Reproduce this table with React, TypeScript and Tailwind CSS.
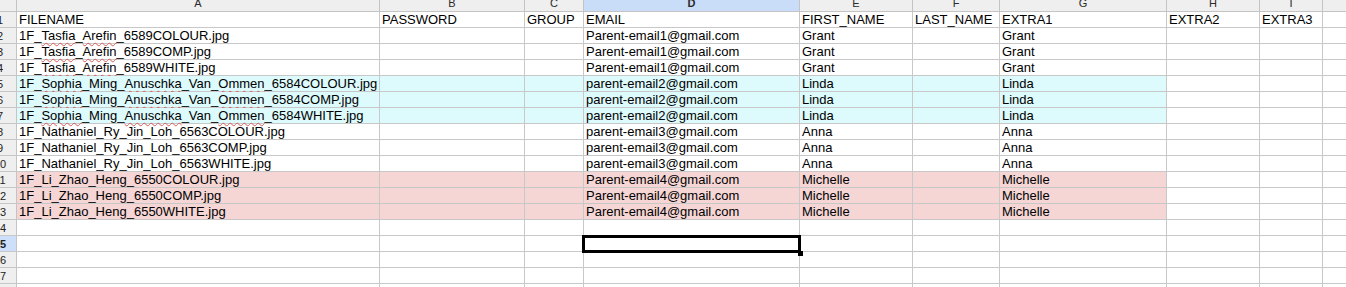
import React from "react";

type Part = string | { s: string };

const WCLS = [
  "w-[363px]",
  "w-[145px]",
  "w-[59px]",
  "w-[216px]",
  "w-[113px]",
  "w-[87px]",
  "w-[167px]",
  "w-[93px]",
  "w-[63px]",
];
const LETTERS = ["A", "B", "C", "D", "E", "F", "G", "H", "I"];

const file = (parts: Part[]) => parts;

type Row = { cells: (Part[] | string)[]; bg?: "cyan" | "pink" };

const rows: Row[] = [
  { cells: ["FILENAME", "PASSWORD", "GROUP", "EMAIL", "FIRST_NAME", "LAST_NAME", "EXTRA1", "EXTRA2", "EXTRA3"] },
  { cells: [file(["1F_", { s: "Tasfia" }, "_", { s: "Arefin" }, "_6589COLOUR.jpg"]), "", "", "Parent-email1@gmail.com", "Grant", "", "Grant", "", ""] },
  { cells: [file(["1F_", { s: "Tasfia" }, "_", { s: "Arefin" }, "_6589COMP.jpg"]), "", "", "Parent-email1@gmail.com", "Grant", "", "Grant", "", ""] },
  { cells: [file(["1F_", { s: "Tasfia" }, "_", { s: "Arefin" }, "_6589WHITE.jpg"]), "", "", "Parent-email1@gmail.com", "Grant", "", "Grant", "", ""] },
  { bg: "cyan", cells: [file(["1F_", { s: "Sophia" }, "_Ming_", { s: "Anuschka" }, "_Van_", { s: "Ommen" }, "_6584COLOUR.jpg"]), "", "", "parent-email2@gmail.com", "Linda", "", "Linda", "", ""] },
  { bg: "cyan", cells: [file(["1F_", { s: "Sophia" }, "_Ming_", { s: "Anuschka" }, "_Van_", { s: "Ommen" }, "_6584COMP.jpg"]), "", "", "parent-email2@gmail.com", "Linda", "", "Linda", "", ""] },
  { bg: "cyan", cells: [file(["1F_", { s: "Sophia" }, "_Ming_", { s: "Anuschka" }, "_Van_", { s: "Ommen" }, "_6584WHITE.jpg"]), "", "", "parent-email2@gmail.com", "Linda", "", "Linda", "", ""] },
  { cells: ["1F_Nathaniel_Ry_Jin_Loh_6563COLOUR.jpg", "", "", "parent-email3@gmail.com", "Anna", "", "Anna", "", ""] },
  { cells: ["1F_Nathaniel_Ry_Jin_Loh_6563COMP.jpg", "", "", "parent-email3@gmail.com", "Anna", "", "Anna", "", ""] },
  { cells: ["1F_Nathaniel_Ry_Jin_Loh_6563WHITE.jpg", "", "", "parent-email3@gmail.com", "Anna", "", "Anna", "", ""] },
  { bg: "pink", cells: ["1F_Li_Zhao_Heng_6550COLOUR.jpg", "", "", "Parent-email4@gmail.com", "Michelle", "", "Michelle", "", ""] },
  { bg: "pink", cells: ["1F_Li_Zhao_Heng_6550COMP.jpg", "", "", "Parent-email4@gmail.com", "Michelle", "", "Michelle", "", ""] },
  { bg: "pink", cells: ["1F_Li_Zhao_Heng_6550WHITE.jpg", "", "", "Parent-email4@gmail.com", "Michelle", "", "Michelle", "", ""] },
  { cells: ["", "", "", "", "", "", "", "", ""] },
  { cells: ["", "", "", "", "", "", "", "", ""] },
  { cells: ["", "", "", "", "", "", "", "", ""] },
  { cells: ["", "", "", "", "", "", "", "", ""] },
  { cells: ["", "", "", "", "", "", "", "", ""] },
];

function Content({ v }: { v: Part[] | string }) {
  if (typeof v === "string") return <>{v}</>;
  return (
    <>
      {v.map((p, i) =>
        typeof p === "string" ? (
          <span key={i}>{p}</span>
        ) : (
          <span
            key={i}
            className="underline decoration-wavy decoration-[#d85a5a] decoration-1 underline-offset-[2px]"
          >
            {p.s}
          </span>
        )
      )}
    </>
  );
}

export default function App() {
  return (
    <div
      className="w-[1346px] h-[287px] overflow-hidden bg-white text-black"
      style={{ fontFamily: '"Liberation Sans", Arial, Helvetica, sans-serif' }}
    >
      {/* column header row */}
      <div className="flex h-[12px] border-b border-[#c4c4c4] bg-[#efefef] text-[11px] text-[#2a2a2a]">
        <div className="w-[17px] shrink-0 border-r border-[#c4c4c4]" />
        {LETTERS.map((l, i) => (
          <div
            key={l}
            className={`${WCLS[i]} shrink-0 border-r border-[#c4c4c4] overflow-hidden text-center leading-[11px] ${
              l === "D" ? "bg-[#c9dcf8] font-bold" : ""
            }`}
          >
            <div className="-mt-[2px]">{l}</div>
          </div>
        ))}
        <div className="flex-1" />
      </div>

      {rows.map((r, ri) => {
        const n = ri + 1;
        const sel = n === 15;
        return (
          <div key={ri} className="flex h-[16px] border-b border-[#c8c8c8]">
            <div
              className={`w-[17px] shrink-0 border-r border-[#c4c4c4] overflow-hidden text-[11px] leading-[15px] ${
                sel ? "bg-[#cddff9] font-bold" : "bg-[#efefef]"
              } text-[#222]`}
            >
              <div className="w-[32px] -ml-[16px] text-center pt-[1px]">{n}</div>
            </div>
            {r.cells.map((c, ci) => {
              const colored = r.bg && ci <= 6;
              const bg = colored ? (r.bg === "cyan" ? "bg-[#ddfafd]" : "bg-[#f5d6d5]") : "";
              return (
                <div
                  key={ci}
                  className={`${WCLS[ci]} ${bg} relative shrink-0 border-r border-[#c8c8c8] whitespace-nowrap text-[13px] leading-[15px] pl-[2px]`}
                >
                  <div>
                    <Content v={c} />
                  </div>
                  {sel && ci === 3 && (
                    <>
                      <div className="absolute -left-[2px] -top-[1px] w-[219px] h-[18px] border-[3px] border-black z-10" />
                      <div className="absolute left-[214px] top-[15px] w-[5px] h-[5px] bg-black z-10" />
                    </>
                  )}
                </div>
              );
            })}
            <div className="flex-1" />
          </div>
        );
      })}
    </div>
  );
}
